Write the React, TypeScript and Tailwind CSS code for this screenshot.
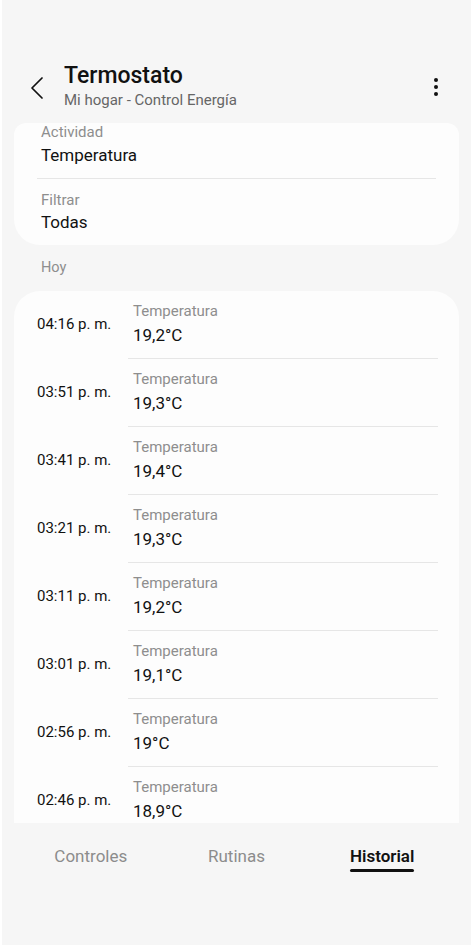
const rows = [
  { time: "04:16 p. m.", value: "19,2°C" },
  { time: "03:51 p. m.", value: "19,3°C" },
  { time: "03:41 p. m.", value: "19,4°C" },
  { time: "03:21 p. m.", value: "19,3°C" },
  { time: "03:11 p. m.", value: "19,2°C" },
  { time: "03:01 p. m.", value: "19,1°C" },
  { time: "02:56 p. m.", value: "19°C" },
  { time: "02:46 p. m.", value: "18,9°C" },
];

function Header() {
  return (
    <div className="h-[123px] flex items-start pt-[62px]">
      <button className="w-[62px] h-[40px] flex items-center justify-center mt-[6px] pl-[8px]">
        <svg width="14" height="22" viewBox="0 0 14 22" fill="none">
          <path d="M12 1 L2 11 L12 21" stroke="#111" strokeWidth="1.7" strokeLinecap="round" strokeLinejoin="round" />
        </svg>
      </button>
      <div className="flex-1 flex flex-col">
        <span className="text-[23px] leading-[28px] font-medium text-[#111]">Termostato</span>
        <span className="text-[15px] leading-[20px] text-[#666]">Mi hogar - Control Energía</span>
      </div>
      <div className="w-[40px] flex flex-col items-center gap-[3.5px] pt-[16px] mr-[15px]">
        <span className="w-[3.5px] h-[3.5px] rounded-full bg-[#111]" />
        <span className="w-[3.5px] h-[3.5px] rounded-full bg-[#111]" />
        <span className="w-[3.5px] h-[3.5px] rounded-full bg-[#111]" />
      </div>
    </div>
  );
}

function FilterCard() {
  return (
    <div className="mx-[12px] bg-[#fdfdfd] rounded-t-[12px] rounded-b-[26px] px-[23px]">
      <div className="flex flex-col gap-[3px] pb-[12px] px-[4px]">
        <span className="text-[15px] leading-[18px] text-[#8e8e8e]">Actividad</span>
        <span className="text-[17px] leading-[22px] text-[#111]">Temperatura</span>
      </div>
      <div className="h-px bg-[#e6e6e6]" />
      <div className="flex flex-col gap-[2px] pt-[12px] pb-[12px] px-[4px]">
        <span className="text-[15px] leading-[18px] text-[#8e8e8e]">Filtrar</span>
        <span className="text-[17px] leading-[22px] text-[#111]">Todas</span>
      </div>
    </div>
  );
}

function HistoryRow({ time, value }: { time: string; value: string }) {
  return (
    <div className="flex">
      <div className="w-[91px] flex items-center text-[15px] text-[#111] pb-[2px]">{time}</div>
      <div className="flex-1 flex flex-col border-b border-[#e6e6e6]">
        <div className="flex flex-col gap-[4px] pt-[11px] pb-[12px] pl-[5px]">
          <span className="text-[15px] leading-[18px] text-[#8e8e8e]">Temperatura</span>
          <span className="text-[17px] leading-[22px] text-[#111]">{value}</span>
        </div>
      </div>
    </div>
  );
}

function Tabs() {
  const tabs = ["Controles", "Rutinas", "Historial"];
  return (
    <div className="h-[122px] grid grid-cols-3 px-[16px] pt-[22px]">
      {tabs.map((t) => {
        const active = t === "Historial";
        return (
          <div key={t} className="flex flex-col items-center">
            <div className="flex flex-col items-stretch">
              <span
                className={
                  active
                    ? "text-[17px] leading-[22px] font-semibold text-[#111]"
                    : "text-[17px] leading-[22px] text-[#8c8c8c]"
                }
              >
                {t}
              </span>
              {active && <span className="mt-[2px] h-[3px] rounded-full bg-[#111]" />}
            </div>
          </div>
        );
      })}
    </div>
  );
}

export default function App() {
  return (
    <div
      className="w-[474px] h-[948px] bg-white pl-[2px] pr-[3px] pb-[3px]"
      style={{ fontFamily: "Roboto, 'Noto Sans', sans-serif" }}
    >
      <div className="h-full bg-[#f6f6f6] flex flex-col">
        <Header />
        <div className="h-[700px] overflow-hidden flex flex-col">
          <FilterCard />
          <div className="px-[39px] pt-[14px] pb-[14px] text-[14.5px] leading-[18px] text-[#8e8e8e]">Hoy</div>
          <div className="mx-[12px] bg-[#fdfdfd] rounded-t-[26px] pl-[23px] pr-[21px] flex-1">
            {rows.map((r) => (
              <HistoryRow key={r.time} time={r.time} value={r.value} />
            ))}
          </div>
        </div>
        <Tabs />
      </div>
    </div>
  );
}
